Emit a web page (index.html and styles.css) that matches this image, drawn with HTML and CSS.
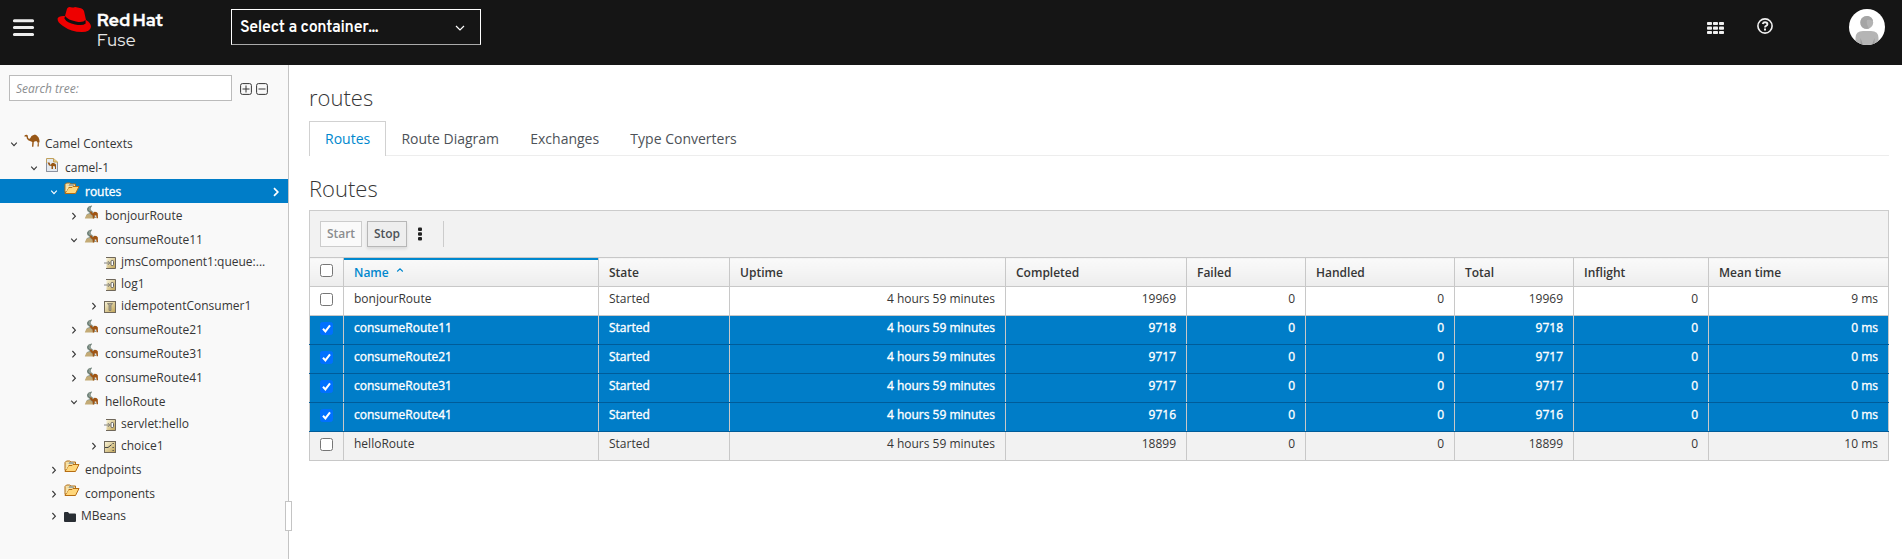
FILE: index.html
```html
<!DOCTYPE html>
<html lang="en">
<head>
<meta charset="utf-8">
<title>Red Hat Fuse</title>
<link rel="stylesheet" href="styles.css">
</head>
<body>
<svg class="defs" width="0" height="0">
  <symbol id="down" viewBox="0 0 10 10"><path d="M2.2 3.6 5 6.6 7.8 3.6" fill="none" stroke="currentColor" stroke-width="1.1"/></symbol>
  <symbol id="right" viewBox="0 0 10 10"><path d="M3.4 2 6.4 5.2 3.4 8.4" fill="none" stroke="currentColor" stroke-width="1.1"/></symbol>
  <symbol id="camel" viewBox="0 0 16 16"><path d="M0 3.2 1.2 2 2.8 1.8 3.8 2.6 4 4.5 5 6 6.2 5.2 7.5 3 9 2.2 11 1.6 12.8 2.6 14.6 4.6 15.4 7 15.6 9.5 14.8 9 14.8 13.5H13.4L13.8 10 12.8 8.3 11 8.2 9.8 9 9.4 13.8H8L8.3 9 6.6 8.3 4.2 7.2 2.8 5.4 2.6 3.8Z" fill="#985716"/></symbol>
  <symbol id="context" viewBox="0 0 16 16"><path d="M2.5 1.5H9.5L13.5 5V14.5H2.5Z" fill="#e3e9ef" stroke="#c0a05c"/><path d="M2.5 6V14.5H13.5V6" fill="none" stroke="#8b91a0"/><path d="M9.5 1.5V5H13.5" fill="#edce84" stroke="#c0a05c"/><path d="M3.5 5.5H5.5L6.5 8 8 6H10L12 7.5V12H11V9.5L9 9V12H7.5V9L5 8.5Z" fill="#985716"/></symbol>
  <symbol id="folder" viewBox="0 0 16 13"><path d="M1 10.5V2.5L2.5 1H5.5L7 2H11.5V5" fill="#f6e0a4" stroke="#ae6c17"/><path d="M3.5 3.5H10M5 2.5H9" stroke="#a3a799"/><path d="M1 11.5 4.5 5.5H8L9 4.5H15L11.5 11.5Z" fill="#ffd77b" stroke="#b66d13"/><path d="M2 9 4 5.3V3" fill="none" stroke="#fff0bc"/></symbol>
  <symbol id="route" viewBox="0 0 16 16"><path d="M1.5 13 3 9 5.5 8 3.2 6 3 3.4 5 1 8 .8 6.8 3 7 5 9.5 7 10 10 12.5 13Z" fill="#8f9d93"/><path d="M.8 13.4 2.4 9.8 6 9 8 11 10.5 13.4Z" fill="#c4ab76"/><path d="M4.4 2.4 3.8 5 6.4 7.2M7.6 1 6 2.4" fill="none" stroke="#647871"/><path d="M5.8 6.6H7.6L8.8 8.4 10.4 6.8 12.4 7 13.8 8.2 14 13.2H12.6L12.2 10.6 10.6 10.6 10.2 13.4H8.8L8.6 10.4 6.6 9Z" fill="#a05412"/></symbol>
  <linearGradient id="gold" x1="0" y1="0" x2="1" y2="1"><stop stop-color="#faf6dc"/><stop offset="1" stop-color="#bfa254"/></linearGradient>
  <symbol id="endpoint" viewBox="0 0 12 12"><path d="M2.5 .5H11.5V11.5H2.5Z" fill="url(#gold)"/><path d="M2 .5H11.5V11.5H2" fill="none" stroke="#6f675a"/><path d="M0 6H5.5M3.8 4 5.8 6 3.8 8" fill="none" stroke="#777" stroke-width=".9"/><rect x="7" y="3.5" width="2.5" height="5" rx="1" fill="#fff" stroke="#555" stroke-width=".9"/></symbol>
  <symbol id="filter" viewBox="0 0 12 12"><rect x=".5" y=".5" width="11" height="11" fill="url(#gold)" stroke="#6f675a"/><path d="M3.5 2.5H8.5L7 4.5V9.5H5V4.5Z" fill="#aaa38c" stroke="#777269" stroke-width=".7"/></symbol>
  <symbol id="choice" viewBox="0 0 12 12"><rect x=".5" y=".5" width="11" height="11" fill="url(#gold)" stroke="#6f675a"/><path d="M1 6.5H4L7.5 3.7M8.5 2.5H9.8M8.5 6.5H9.8M8.5 9.5H9.8" fill="none" stroke="#444"/></symbol>
</svg>
<header class="masthead">
  <svg class="burger" width="23" height="18" viewBox="0 0 23 18"><path d="M2.4 1.7H20.6M2.4 8.6H20.6M2.4 15.5H20.6" stroke="#ededed" stroke-width="3" stroke-linecap="round"/></svg>
  <div class="brand">
    <svg class="hat" width="35" height="28" viewBox="0 0 35 28"><path d="M8 10 10 2.8Q11 .3 14 1.2 16 2 18 1L24 2.2Q26 3 27 5L29 14Q34 17 34 21 33 26 25 26 14 26 6 20 0 16 .6 12.5 1.5 9.5 8 10Z" fill="#e00"/><path d="M8 10 7.4 12.5Q10 17 18 18.5 26 20 28.7 17.5L28.5 14Q26 17 19 15.5 11 14 8 10Z" fill="#111"/></svg>
    <div class="wordmark"><b>Red Hat</b><span>Fuse</span></div>
  </div>
  <div class="container-select"><span>Select a container...</span><svg width="10" height="10" viewBox="0 0 10 10"><path d="M1 3 5 7 9 3" fill="none" stroke="#fff" stroke-width="1.2"/></svg></div>
  <div class="tools">
    <svg width="17" height="14" viewBox="0 0 17 14" fill="#f0f0f0"><rect x="0" y="1" width="5" height="3" rx=".8"/><rect x="6" y="1" width="5" height="3" rx=".8"/><rect x="12" y="1" width="5" height="3" rx=".8"/><rect x="0" y="5.5" width="5" height="3.2" rx=".8"/><rect x="6" y="5.5" width="5" height="3.2" rx=".8"/><rect x="12" y="5.5" width="5" height="3.2" rx=".8"/><rect x="0" y="10" width="5" height="3" rx=".8"/><rect x="6" y="10" width="5" height="3" rx=".8"/><rect x="12" y="10" width="5" height="3" rx=".8"/></svg>
    <svg class="help" width="16" height="16" viewBox="0 0 16 16" fill="none" stroke="#f0f0f0"><circle cx="8" cy="8" r="7.1" stroke-width="1.6"/><path d="M5.7 6Q6.2 4.3 8 4.3 10.4 4.3 10.4 6.2 10.4 7.4 9 8 8 8.4 8 9.4" stroke-width="1.9"/><path d="M7 11.5H9" stroke-width="2"/></svg>
    <svg class="avatar" width="36" height="36" viewBox="0 0 36 36"><defs><clipPath id="disc"><circle cx="18" cy="18" r="18"/></clipPath></defs><circle cx="18" cy="18" r="18" fill="#fff"/><g clip-path="url(#disc)"><circle cx="17.7" cy="13.5" r="6.5" fill="#b3b3b3"/><path d="M12.5 9.5Q15 6.5 19 7 23.5 8 24 12 20 10 18 11 17 15 20 19.5 14 21 11.8 16 10.8 12 12.5 9.5Z" fill="#a5a5a5"/><path d="M6.5 36V29Q6.5 22 14 22H22Q29.5 22 29.5 29V36Z" fill="#b5b5b5"/><path d="M11.5 36V29L14 36ZM23 36 25.5 29V36Z" fill="#999"/></g></svg>
  </div>
</header>
<div class="shell">
  <aside class="sidebar">
    <div class="search">
      <div class="search-box">Search tree:</div>
      <svg width="12" height="12" viewBox="0 0 12 12" fill="none" stroke="#363636"><rect x=".6" y=".6" width="10.8" height="10.8" rx="1.8"/><path d="M2.5 6H9.5M6 2.5V9.5"/></svg>
      <svg width="12" height="12" viewBox="0 0 12 12" fill="none" stroke="#363636"><rect x=".6" y=".6" width="10.8" height="10.8" rx="1.8"/><path d="M2.5 6H9.5"/></svg>
    </div>
    <ul class="tree" id="tree"></ul>
    <div class="grip"></div>
  </aside>
  <main class="content">
    <h1>routes</h1>
    <nav class="tabs"><a class="active">Routes</a><a>Route Diagram</a><a>Exchanges</a><a>Type Converters</a></nav>
    <h2>Routes</h2>
    <div class="toolbar"><button class="btn" disabled>Start</button><button class="btn stop">Stop</button><svg class="kebab" width="4" height="14" viewBox="0 0 4 14" fill="#222"><rect y="0.5" width="4" height="3.4" rx="1"/><rect y="5.3" width="4" height="3.4" rx="1"/><rect y="10.1" width="4" height="3.4" rx="1"/></svg><i class="divider"></i></div>
    <table class="grid">
      <colgroup><col class="w-check"><col class="w-name"><col class="w-state"><col class="w-uptime"><col class="w-completed"><col class="w-failed"><col class="w-handled"><col class="w-total"><col class="w-inflight"><col class="w-mean"></colgroup>
      <thead><tr><th><span class="check"></span></th><th class="sorted">Name<svg width="8" height="6" viewBox="0 0 8 6"><path d="M1.2 4.5 4 1.8 6.8 4.5" fill="none" stroke="#0088ce" stroke-width="1.1"/></svg></th><th>State</th><th>Uptime</th><th>Completed</th><th>Failed</th><th>Handled</th><th>Total</th><th>Inflight</th><th>Mean time</th></tr></thead>
      <tbody id="rows"></tbody>
    </table>
  </main>
</div>
<script src="app.js"></script>
</body>
</html>
```
FILE: styles.css
```css
* { box-sizing: border-box; }
body { margin: 0; height: 559px; overflow: hidden; display: flex; flex-direction: column; font: 12px/20px "Open Sans", "Noto Sans", sans-serif; color: #363636; background: #fff; }
svg { display: block; flex: none; }
.defs { position: absolute; }
.masthead { height: 65px; flex: none; background: #151515; display: flex; align-items: flex-start; padding-left: 12px; }
.burger { margin-top: 19px; }
.brand { display: flex; margin-left: 22px; width: 174px; padding-top: 6px; }
.wordmark { display: flex; flex-direction: column; margin: 4px 0 0 5px; color: #fff; font: 17.5px/20px "Red Hat Display", "Inter", sans-serif; white-space: nowrap; }
.wordmark b { font-weight: 700; letter-spacing: .5px; word-spacing: -2px; -webkit-text-stroke: .4px #fff; }
.wordmark span { color: #e5e5e5; font-weight: 400; letter-spacing: .5px; }
.container-select { width: 250px; height: 36px; margin-top: 9px; border: 1px solid #fff; border-bottom-color: #aaa; display: flex; align-items: center; justify-content: space-between; padding: 1px 15px 0 8px; color: #fff; font: 600 16px/20px "Overpass", "Roboto", sans-serif; letter-spacing: -.27px; }
.tools { margin-left: auto; display: flex; padding: 21px 17px 0 0; }
.help { margin: -3px 76px 0 33px; }
.avatar { margin-top: -12px; }
.shell { flex: 1; display: flex; min-height: 0; }
.sidebar { width: 289px; flex: none; background: #f9f9f9; border-right: 1px solid #c4c4c4; position: relative; }
.search { display: flex; align-items: center; gap: 4px; padding: 10px 0 0 9px; }
.search-box { width: 223px; height: 26px; border: 1px solid #bbb; background: #fff; padding: 3px 6px 0; font-style: italic; color: #8b8d8f; margin-right: 4px; }
.search > svg { margin-top: 2px; }
.tree { list-style: none; margin: 30px 0 0; padding: 0; }
.node { height: 24px; display: flex; align-items: center; color: #363636; white-space: nowrap; padding-top: 1px; }
.node.short { height: 22px; padding-top: 0; }
.node.on { background: #007dc8; color: #fff; }
.node.on span { -webkit-text-stroke: .35px #fff; }
.indent-0 { padding-left: 9px; }
.indent-1 { padding-left: 29px; }
.indent-2 { padding-left: 49px; }
.indent-3 { padding-left: 69px; }
.indent-4 { padding-left: 89px; }
.arrow { width: 10px; height: 10px; }
.icon { width: 16px; height: 16px; margin: -6px 5px 0 5px; }
.icon-folder { height: 13px; margin-top: -7px; }
.short .icon { width: 12px; height: 12px; margin: 1px 5px 0 5px; }
.go { margin: 0 7px 0 auto; width: 10px; height: 10px; }
.go path { stroke-width: 1.7; }
.grip { position: absolute; right: -4px; top: 436px; width: 7px; height: 30px; background: #fff; border: 1px solid #c4c4c4; }
.content { flex: 1; min-width: 0; padding: 0 13px 0 20px; }
h1, h2 { margin: 0; font-size: 22px; line-height: 24px; font-weight: 300; color: #363636; }
h1 { margin-top: 20px; }
h2 { margin: 20px 0 10px; }
.tabs { display: flex; height: 35px; margin-top: 12px; border-bottom: 1px solid #ededed; font-size: 14px; color: #4d5258; }
.tabs a { height: 35px; padding: 7px 15px 0; border: 1px solid transparent; border-bottom: 0; margin-right: -.8px; }
.tabs .active { color: #0088ce; background: #fff; border-color: #d1d1d1; }
.toolbar { height: 47px; background: #f2f2f2; border: 1px solid #ccc; border-bottom: 0; display: flex; align-items: center; padding: 0 10px; }
.btn { height: 26px; width: 42px; padding: 0 0 2px; border: 1px solid #ccc; background: #fafafa; color: #8b8d8f; font: 600 12px "Open Sans", sans-serif; }
.stop { width: 40px; margin-left: 5px; border-color: #b7b7b7; background: #eee; color: #4d5258; box-shadow: 0 2px 3px rgba(3,3,3,.1); }
.kebab { margin-left: 11px; }
.divider { width: 1px; height: 26px; background: #ccc; margin-left: 21px; }
.grid { width: 1580px; table-layout: fixed; border-collapse: collapse; }
.grid tr { height: 29px; }
.grid th, .grid td { border: 1px solid #c8c8c8; padding: 0 10px; line-height: 20px; height: 29px; }
.grid th { text-align: left; font-weight: 600; background: linear-gradient(#fafafa, #ededed); padding-top: 2px; }
.grid td { text-align: right; padding-bottom: 4px; }
.grid td:nth-child(2), .grid td:nth-child(3) { text-align: left; }
.grid .sorted { color: #0088ce; box-shadow: inset 0 2px #0088ce; }
.sorted svg { display: inline-block; margin: 0 0 4px 7px; }
.grid tr.even td { background: #f2f2f2; }
.grid tr.selected td { background: #007dc8; color: #fff; -webkit-text-stroke: .35px #fff; border-bottom-color: #005c99; }
.w-check { width: 34px; } .w-name { width: 255px; } .w-state { width: 131px; } .w-uptime { width: 276px; } .w-completed { width: 181px; } .w-failed { width: 119px; } .w-handled { width: 149px; } .w-total { width: 119px; } .w-inflight { width: 135px; } .w-mean { width: 180px; }
.check { display: block; width: 13px; height: 13px; border: 1px solid #767676; border-radius: 2.5px; background: #fff; margin-top: -5px; }
td .check { margin-top: 1px; }
.selected .check { border-color: #0070ff; background: #0070ff; }
```
FILE: app.js
```js
const nodes = [
  [0, 'Camel Contexts', 'camel', 'down'],
  [1, 'camel-1', 'context', 'down'],
  [2, 'routes', 'folder', 'down', 'on'],
  [3, 'bonjourRoute', 'route', 'right'],
  [3, 'consumeRoute11', 'route', 'down'],
  [4, 'jmsComponent1:queue:...', 'endpoint', '', 'short'],
  [4, 'log1', 'endpoint', '', 'short'],
  [4, 'idempotentConsumer1', 'filter', 'right', 'short'],
  [3, 'consumeRoute21', 'route', 'right'],
  [3, 'consumeRoute31', 'route', 'right'],
  [3, 'consumeRoute41', 'route', 'right'],
  [3, 'helloRoute', 'route', 'down'],
  [4, 'servlet:hello', 'endpoint', '', 'short'],
  [4, 'choice1', 'choice', 'right', 'short'],
  [2, 'endpoints', 'folder', 'right'],
  [2, 'components', 'folder', 'right'],
  [2, 'MBeans', 'plain', 'right', 'short']
];
const plain = '<svg class="icon" viewBox="0 0 12 12"><path d="M0 2Q0 1 1 1H4L5.2 2.5H11Q12 2.5 12 3.5V10Q12 11 11 11H1Q0 11 0 10Z" fill="#292e34"/></svg>';
document.getElementById('tree').innerHTML = nodes.map(([level, label, icon, arrow, state = '']) =>
  `<li class="node indent-${level} ${state}"><svg class="arrow">${arrow ? `<use href="#${arrow}"/>` : ''}</svg>` +
  (icon === 'plain' ? plain : `<svg class="icon icon-${icon}"><use href="#${icon}"/></svg>`) +
  `<span>${label}</span>${state === 'on' ? '<svg class="go" viewBox="0 0 10 10"><path d="M3 1.2 6.8 5 3 8.8" fill="none" stroke="#fff"/></svg>' : ''}</li>`).join('');

const rows = [
  ['bonjourRoute', 19969, '9 ms'],
  ['consumeRoute11', 9718, '0 ms', 'selected'],
  ['consumeRoute21', 9717, '0 ms', 'selected'],
  ['consumeRoute31', 9717, '0 ms', 'selected'],
  ['consumeRoute41', 9716, '0 ms', 'selected'],
  ['helloRoute', 18899, '10 ms', 'even']
];
const tick = '<svg width="11" height="11" viewBox="0 0 11 11"><path d="M2 5.8 4.4 8.4 9 2.3" fill="none" stroke="#fff" stroke-width="2"/></svg>';
document.getElementById('rows').innerHTML = rows.map(([name, total, mean, cls = '']) =>
  `<tr class="${cls}"><td><span class="check">${cls === 'selected' ? tick : ''}</span></td><td>${name}</td><td>Started</td><td>4 hours 59 minutes</td><td>${total}</td><td>0</td><td>0</td><td>${total}</td><td>0</td><td>${mean}</td></tr>`).join('');
```
